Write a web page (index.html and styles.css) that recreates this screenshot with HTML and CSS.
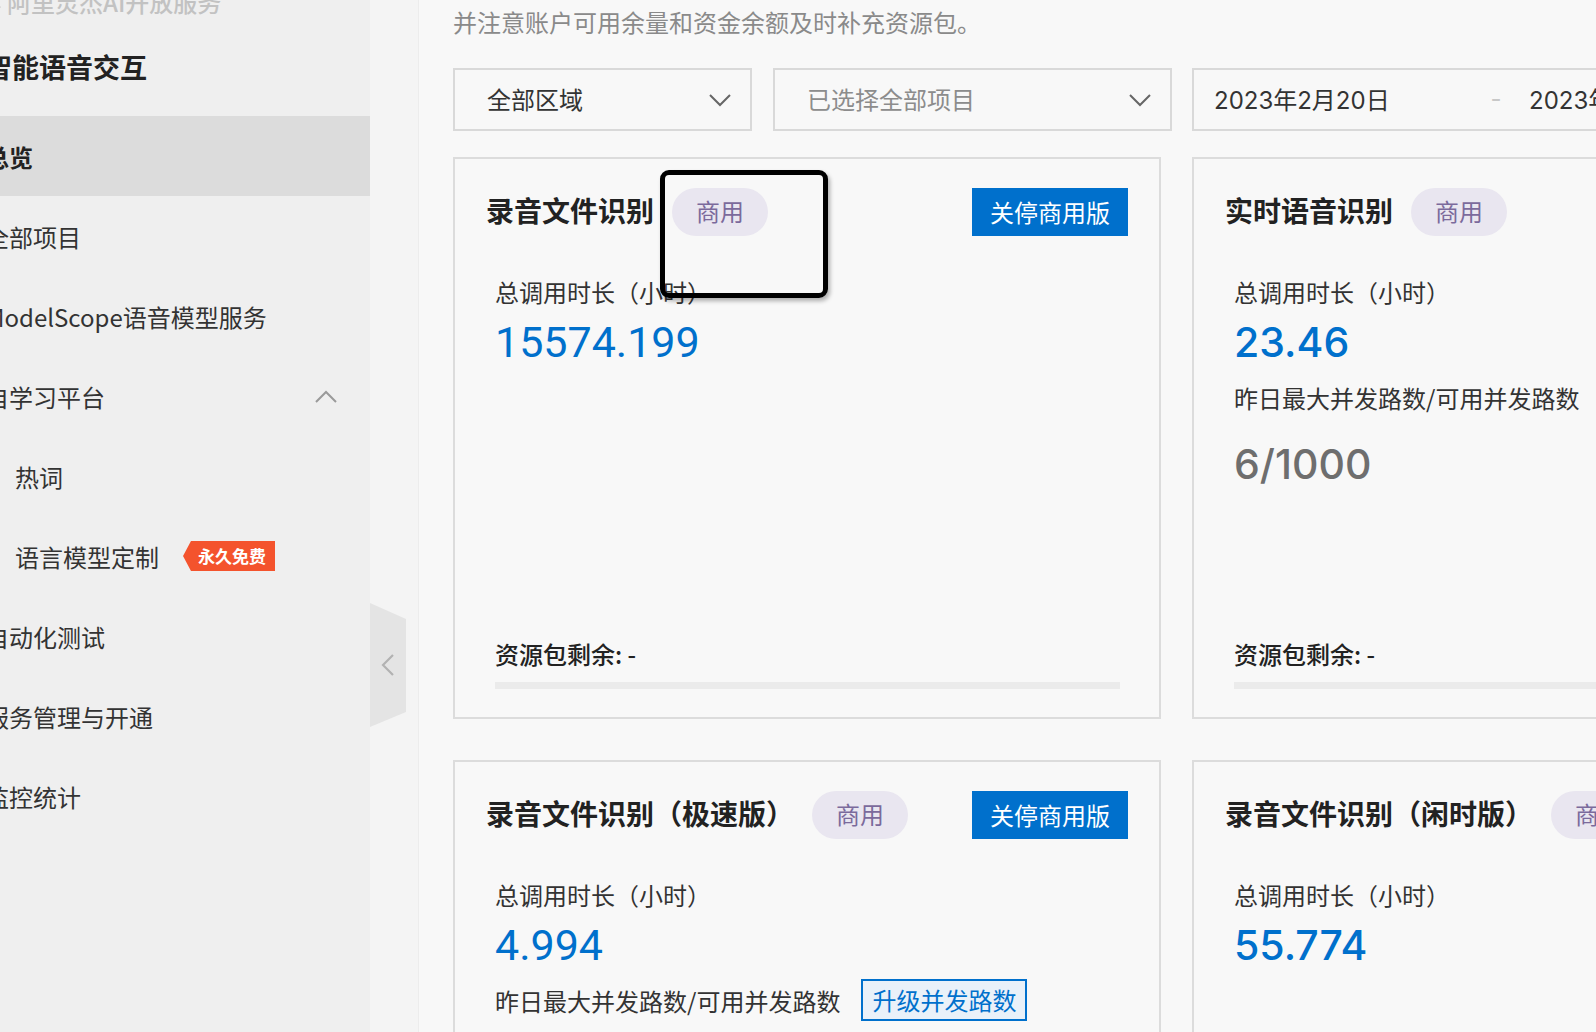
FILE: index.html
```html
<!DOCTYPE html>
<html lang="zh-CN">
<head>
    <meta charset="UTF-8">
    <meta name="viewport" content="width=device-width, initial-scale=1.0">
    <title>智能语音交互 - 总览</title>
    <link rel="stylesheet" href="styles.css">
</head>
<body>
<div class="layout">
    <aside class="sidebar">
        <div class="sidebar-inner">
            <a class="back-link">
                <svg width="12" height="18" viewBox="0 0 12 18"><path d="M10 2 L3 9 L10 16" fill="none" stroke="#c4c4c4" stroke-width="2.5"/></svg>
                阿里灵杰AI开放服务
            </a>
            <h2 class="product-title">智能语音交互</h2>
            <ul class="side-nav">
                <li class="nav-item active">总览</li>
                <li class="nav-item">全部项目</li>
                <li class="nav-item">ModelScope语音模型服务</li>
                <li class="nav-item nav-group">
                    <span>自学习平台</span>
                    <svg width="24" height="15" viewBox="0 0 24 15"><path d="M2 13 L12 3 L22 13" fill="none" stroke="#9a9a9a" stroke-width="2"/></svg>
                </li>
                <li class="nav-item sub">热词</li>
                <li class="nav-item sub">语言模型定制<span class="tag-free">永久免费</span></li>
                <li class="nav-item">自动化测试</li>
                <li class="nav-item">服务管理与开通</li>
                <li class="nav-item">监控统计</li>
            </ul>
        </div>
    </aside>

    <div class="collapse-bar">
        <div class="collapse-btn">
            <svg width="14" height="24" viewBox="0 0 14 24"><path d="M12 2 L2 12 L12 22" fill="none" stroke="#b2b2b2" stroke-width="2.2"/></svg>
        </div>
    </div>

    <main class="main">
        <p class="tip">并注意账户可用余量和资金余额及时补充资源包。</p>

        <div class="filters">
            <div class="select select-region">
                <span>全部区域</span>
                <svg width="24" height="14" viewBox="0 0 24 14"><path d="M2 2 L12 12 L22 2" fill="none" stroke="#666" stroke-width="2"/></svg>
            </div>
            <div class="select select-project">
                <span class="placeholder">已选择全部项目</span>
                <svg width="24" height="14" viewBox="0 0 24 14"><path d="M2 2 L12 12 L22 2" fill="none" stroke="#666" stroke-width="2"/></svg>
            </div>
            <div class="date-range">
                <span class="date-start">2023年2月20日</span>
                <span class="date-sep">-</span>
                <span class="date-end">2023年2月27日</span>
            </div>
        </div>

        <div class="cards">
            <!-- 录音文件识别 -->
            <div class="card">
                <div class="card-head">
                    <h3 class="card-title">录音文件识别</h3>
                    <span class="badge">商用</span>
                    <button class="btn-primary">关停商用版</button>
                </div>
                <div class="card-body">
                    <div class="metric-label">总调用时长（小时）</div>
                    <div class="metric-value">15574.199</div>
                </div>
                <div class="card-foot">
                    <div class="remain">资源包剩余: -</div>
                    <div class="remain-bar"></div>
                </div>
                <div class="mark-box"></div>
            </div>

            <!-- 实时语音识别 -->
            <div class="card card-alt">
                <div class="card-head">
                    <h3 class="card-title">实时语音识别</h3>
                    <span class="badge">商用</span>
                </div>
                <div class="card-body">
                    <div class="metric-label">总调用时长（小时）</div>
                    <div class="metric-value">23.46</div>
                    <div class="metric-row">昨日最大并发路数/可用并发路数</div>
                    <div class="metric-value muted">6/1000</div>
                </div>
                <div class="card-foot">
                    <div class="remain">资源包剩余: -</div>
                    <div class="remain-bar"></div>
                </div>
            </div>

            <!-- 录音文件识别（极速版） -->
            <div class="card">
                <div class="card-head">
                    <h3 class="card-title">录音文件识别（极速版）</h3>
                    <span class="badge">商用</span>
                    <button class="btn-primary">关停商用版</button>
                </div>
                <div class="card-body">
                    <div class="metric-label">总调用时长（小时）</div>
                    <div class="metric-value">4.994</div>
                    <div class="metric-row">昨日最大并发路数/可用并发路数<button class="btn-outline">升级并发路数</button></div>
                </div>
            </div>

            <!-- 录音文件识别（闲时版） -->
            <div class="card card-alt">
                <div class="card-head">
                    <h3 class="card-title">录音文件识别（闲时版）</h3>
                    <span class="badge">商用</span>
                </div>
                <div class="card-body">
                    <div class="metric-label">总调用时长（小时）</div>
                    <div class="metric-value">55.774</div>
                </div>
            </div>
        </div>
    </main>
</div>
</body>
</html>
```

FILE: styles.css
```css
:root {
    --blue: #0070cc;
    --text: #333;
    --border: #d9d9d9;
    --side-bg: #efefef;
    --main-bg: #f8f8f8;
}

* {
    margin: 0;
    padding: 0;
    box-sizing: border-box;
}

body {
    font-family: "Noto Sans CJK SC", "Noto Sans", sans-serif;
    color: var(--text);
    background: var(--main-bg);
    overflow: hidden;
}

.layout {
    display: flex;
    height: 100vh;
    overflow: hidden;
}

/* 左侧菜单 */
.sidebar {
    width: 370px;
    flex-shrink: 0;
    background: var(--side-bg);
    overflow: hidden;
}

.sidebar-inner {
    margin-left: -15px;
}

.back-link {
    display: flex;
    align-items: center;
    gap: 5px;
    margin-top: -15px;
    padding-left: 5px;
    height: 32px;
    font-size: 24px;
    font-weight: 500;
    color: #c2c2c2;
}

.product-title {
    margin-top: 30px;
    font-size: 27px;
    line-height: 40px;
    font-weight: 700;
    color: #222;
}

.side-nav {
    list-style: none;
    margin-top: 29px;
}

.nav-item {
    display: flex;
    align-items: center;
    height: 80px;
    padding-right: 32px;
    font-size: 24px;
    color: var(--text);
    white-space: nowrap;
}

.nav-item.active {
    background: #dcdcdc;
    font-weight: 700;
    color: #222;
}

.nav-item.sub {
    padding-left: 30px;
}

.nav-group {
    justify-content: space-between;
}

.tag-free {
    margin-left: 24px;
    height: 30px;
    padding: 0 9px 0 15px;
    background: #f4532d;
    color: #fff;
    font-size: 17px;
    font-weight: 700;
    line-height: 30px;
    clip-path: polygon(0 50%, 8px 0, 100% 0, 100% 100%, 8px 100%);
}

/* 收起按钮 */
.collapse-bar {
    width: 48px;
    flex-shrink: 0;
    background: #f4f4f4;
    padding-top: 603px;
}

.collapse-btn {
    width: 36px;
    height: 124px;
    background: #e4e4e4;
    clip-path: polygon(0 0, 100% 13%, 100% 88%, 0 100%);
    display: flex;
    align-items: center;
    justify-content: center;
}

/* 主区域 */
.main {
    flex: 1;
    min-width: 0;
    border-left: 1px solid #ececec;
    padding: 6px 0 0 34px;
    overflow: hidden;
}

.tip {
    font-size: 24px;
    line-height: 32px;
    color: #8a8a8a;
    white-space: nowrap;
}

.filters {
    display: flex;
    margin-top: 30px;
    gap: 21px;
}

.select,
.date-range {
    flex-shrink: 0;
    height: 63px;
    border: 2px solid var(--border);
    display: flex;
    align-items: center;
    font-size: 24px;
    padding-bottom: 3px;
}

.select {
    justify-content: space-between;
    padding-left: 32px;
    padding-right: 18px;
}

.select svg {
    margin-top: 3px;
}

.select-region {
    width: 299px;
}

.select-project {
    width: 399px;
}

.placeholder {
    color: #8c8c8c;
}

.date-range {
    width: 520px;
    margin-left: -1px;
    padding-left: 20px;
    font-family: Inter, "Noto Sans CJK SC", sans-serif;
    white-space: nowrap;
}

.date-start {
    width: 272px;
}

.date-sep {
    width: 20px;
    color: #c8c8c8;
    text-align: center;
}

.date-end {
    margin-left: 23px;
}

/* 卡片 */
.cards {
    display: grid;
    grid-template-columns: 708px 708px;
    gap: 41px 31px;
    margin-top: 26px;
}

.card {
    position: relative;
    height: 562px;
    border: 2px solid #dcdcdc;
    padding: 29px 31px 28px;
    display: flex;
    flex-direction: column;
}

.card-head {
    display: flex;
    align-items: center;
    height: 48px;
    white-space: nowrap;
}

.card-title {
    font-size: 28px;
    line-height: 40px;
    margin-top: -4px;
    font-weight: 700;
    color: #222;
}

.badge {
    margin-left: 18px;
    height: 48px;
    line-height: 46px;
    padding: 0 24px;
    border-radius: 24px;
    background: #e9e6f0;
    color: #7b6a9c;
    font-size: 24px;
}

.btn-primary {
    margin-left: auto;
    height: 48px;
    padding: 0 18px 2px;
    border: none;
    background: var(--blue);
    color: #fff;
    font-family: inherit;
    font-size: 24px;
}

.card-body {
    padding-left: 9px;
}

.metric-label {
    margin-top: 40px;
    font-size: 24px;
    line-height: 32px;
}

.metric-value {
    margin-top: 9px;
    font-family: Roboto, sans-serif;
    font-size: 43px;
    line-height: 50px;
    color: var(--blue);
}

.card-alt .metric-value {
    font-family: Inter, sans-serif;
    font-weight: 500;
    font-size: 41px;
}

.metric-value.muted {
    margin-top: 26px;
    color: #6e6e6e;
}

.metric-row {
    display: flex;
    align-items: center;
    height: 32px;
    margin-top: 14px;
    font-size: 24px;
    white-space: nowrap;
}

.btn-outline {
    margin-left: 21px;
    height: 42px;
    padding: 0 9px 2px;
    border: 2px solid var(--blue);
    background: #e9f1f9;
    color: var(--blue);
    font-family: inherit;
    font-size: 24px;
}

.card-foot {
    margin-top: auto;
    padding-left: 9px;
}

.remain {
    font-size: 24px;
    line-height: 32px;
    font-weight: 500;
    color: #222;
}

.remain-bar {
    margin-top: 12px;
    margin-right: 8px;
    height: 7px;
    background: #ebebeb;
}

/* 标注框 */
.mark-box {
    position: absolute;
    left: 205px;
    top: 11px;
    width: 168px;
    height: 128px;
    border: 5px solid #000;
    border-radius: 9px;
    box-shadow: 2px 3px 4px rgba(0, 0, 0, 0.3);
}
```
